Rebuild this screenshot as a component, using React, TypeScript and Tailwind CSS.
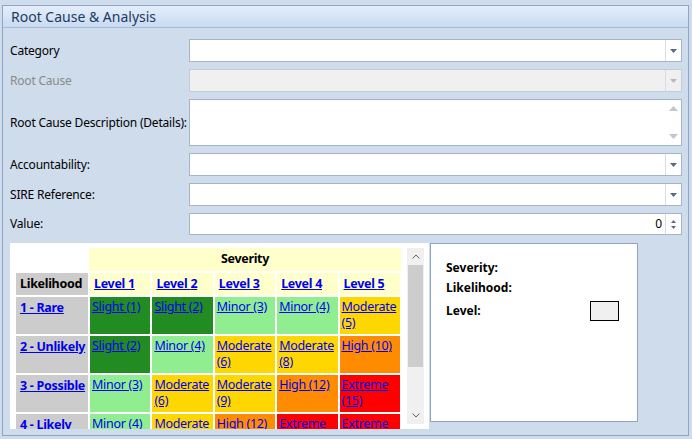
const FONT = { fontFamily: '"Segoe UI", "Noto Sans", "Open Sans", sans-serif' }

const Arrow = ({ dim }: { dim?: boolean }) => (
  <span className={`flex w-[16px] shrink-0 items-center justify-center border-l border-[#d6dde8] ${dim ? "text-[#b8b8b8]" : "text-[#5a6a80]"}`}>
    <svg width="7" height="4" viewBox="0 0 7 4"><path d="M0 0h7L3.5 4z" fill="currentColor" /></svg>
  </span>
)

function Combo({ dim }: { dim?: boolean }) {
  return (
    <div className={`flex h-[23px] border ${dim ? "border-[#c3cbd6] bg-[#f0f0f0]" : "border-[#a5b5cc] bg-white"}`}>
      <div className="flex-1" />
      <Arrow dim={dim} />
    </div>
  )
}

const Row = ({ label, dim, h, children }: { label: string; dim?: boolean; h: string; children: any }) => (
  <div className={`flex items-center ${h}`}>
    <div className={`w-[179px] shrink-0 whitespace-nowrap text-[12px] tracking-[-0.2px] ${dim ? "text-[#8a8a8a]" : "text-black"}`}>{label}</div>
    <div className="flex-1">{children}</div>
  </div>
)

const C = {
  dg: "bg-[#228b22]", lg: "bg-[#90ee90]", y: "bg-[#ffd700]", o: "bg-[#ff8c00]", r: "bg-[#ff0000]",
}

const ROWS: { name: string; cells: [string, string][] }[] = [
  { name: "1 - Rare", cells: [["Slight (1)", C.dg], ["Slight (2)", C.dg], ["Minor (3)", C.lg], ["Minor (4)", C.lg], ["Moderate (5)", C.y]] },
  { name: "2 - Unlikely", cells: [["Slight (2)", C.dg], ["Minor (4)", C.lg], ["Moderate (6)", C.y], ["Moderate (8)", C.y], ["High (10)", C.o]] },
  { name: "3 - Possible", cells: [["Minor (3)", C.lg], ["Moderate (6)", C.y], ["Moderate (9)", C.y], ["High (12)", C.o], ["Extreme (15)", C.r]] },
  { name: "4 - Likely", cells: [["Minor (4)", C.lg], ["Moderate (8)", C.y], ["High (12)", C.o], ["Extreme (16)", C.r], ["Extreme (20)", C.r]] },
]

export default function App() {
  return (
    <div style={FONT} className="h-[439px] w-[692px] overflow-hidden bg-[#cfdcec] pl-[2px] pr-[3px] pt-[5px]">
      <div className="flex h-[431px] flex-col border border-[#8ea5c8]">
        <div className="flex h-[22px] items-center border-b border-[#a8bbd6] bg-gradient-to-b from-[#e4eefa] to-[#c8dbf2] pl-[8px] text-[14px] text-[#1e3a5c]">
          Root Cause &amp; Analysis
        </div>
        <div className="flex flex-col gap-[7px] pl-[7px] pr-[6px] pt-[11px]">
          <Row label="Category" h="h-[23px]"><Combo /></Row>
          <Row label="Root Cause" dim h="h-[23px]"><Combo dim /></Row>
          <Row label="Root Cause Description (Details):" h="h-[47px]">
            <div className="flex h-[47px] border border-[#a5b5cc] bg-white">
              <div className="flex-1" />
              <div className="flex w-[16px] flex-col items-center justify-between py-[6px] text-[#c0c6d0]">
                <svg width="9" height="5" viewBox="0 0 9 5"><path d="M0 5h9L4.5 0z" fill="currentColor" /></svg>
                <svg width="9" height="5" viewBox="0 0 9 5"><path d="M0 0h9L4.5 5z" fill="currentColor" /></svg>
              </div>
            </div>
          </Row>
          <Row label="Accountability:" h="h-[23px]"><Combo /></Row>
          <Row label="SIRE Reference:" h="h-[23px]"><Combo /></Row>
          <Row label="Value:" h="h-[22px]">
            <div className="flex h-[22px] border border-[#a5b5cc] bg-white">
              <div className="flex-1 pr-[3px] text-right text-[12px] leading-[20px]">0</div>
              <div className="flex w-[16px] flex-col items-center justify-center gap-[3px] border-l border-[#d6dde8] text-[#5a6a80]">
                <svg width="5" height="3" viewBox="0 0 5 3"><path d="M0 3h5L2.5 0z" fill="currentColor" /></svg>
                <svg width="5" height="3" viewBox="0 0 5 3"><path d="M0 0h5L2.5 3z" fill="currentColor" /></svg>
              </div>
            </div>
          </Row>
        </div>
        <div className="mt-[8px] flex gap-[1px] pl-[7px]">
          <div className="flex h-[186px] w-[419px] overflow-hidden bg-white pl-[4px] pt-[5px]">
            <table className="h-fit w-[388px] table-fixed border-collapse text-[12.5px] tracking-[-0.3px]">
              <colgroup>
                <col className="w-[74px]" /><col /><col /><col /><col /><col />
              </colgroup>
              <tbody>
                <tr className="h-[24px]">
                  <td />
                  <td colSpan={5} className="border-b-2 border-white bg-[#ffffcc] text-center font-bold">Severity</td>
                </tr>
                <tr className="h-[24px]">
                  <td className="border-2 border-white bg-[#cccccc] pl-[4px] font-bold">Likelihood</td>
                  {[1, 2, 3, 4, 5].map((n) => (
                    <td key={n} className="border-2 border-white bg-[#ffffcc] pl-[4px] font-bold text-[#0000ee] underline">Level {n}</td>
                  ))}
                </tr>
                {ROWS.map((r) => (
                  <tr key={r.name} className="h-[39px]">
                    <td className="whitespace-nowrap border-2 border-white bg-[#cccccc] pl-[4px] pt-[2px] align-top font-bold text-[#0000ee] underline">{r.name}</td>
                    {r.cells.map(([t, c], i) => (
                      <td key={i} className={`border-2 border-white ${c} pl-[2px] pt-[2px] align-top leading-[16px] text-[#0000ee] underline`}>{t}</td>
                    ))}
                  </tr>
                ))}
              </tbody>
            </table>
            <div className="ml-[5px] flex h-[176px] w-[17px] flex-col bg-[#f0f0f0]">
              <div className="flex h-[17px] items-center justify-center text-[#606060]">
                <svg width="8" height="5" viewBox="0 0 8 5"><path d="M0.5 4.5L4 1l3.5 3.5" stroke="currentColor" fill="none" /></svg>
              </div>
              <div className="mx-[1px] h-[102px] bg-[#cdcdcd]" />
              <div className="flex-1" />
              <div className="flex h-[17px] items-center justify-center text-[#606060]">
                <svg width="8" height="5" viewBox="0 0 8 5"><path d="M0.5 0.5L4 4l3.5-3.5" stroke="currentColor" fill="none" /></svg>
              </div>
            </div>
          </div>
          <div className="h-[179px] w-[208px] border border-[#8ea5c8] bg-white pl-[15px] pr-[18px] pt-[15px] text-[12px] font-bold">
            <div className="h-[20px]">Severity:</div>
            <div className="h-[20px]">Likelihood:</div>
            <div className="flex h-[24px] items-center justify-between">
              <span>Level:</span>
              <span className="h-[20px] w-[29px] border border-black bg-[#f0f0f0]" />
            </div>
          </div>
        </div>
      </div>
    </div>
  )
}
